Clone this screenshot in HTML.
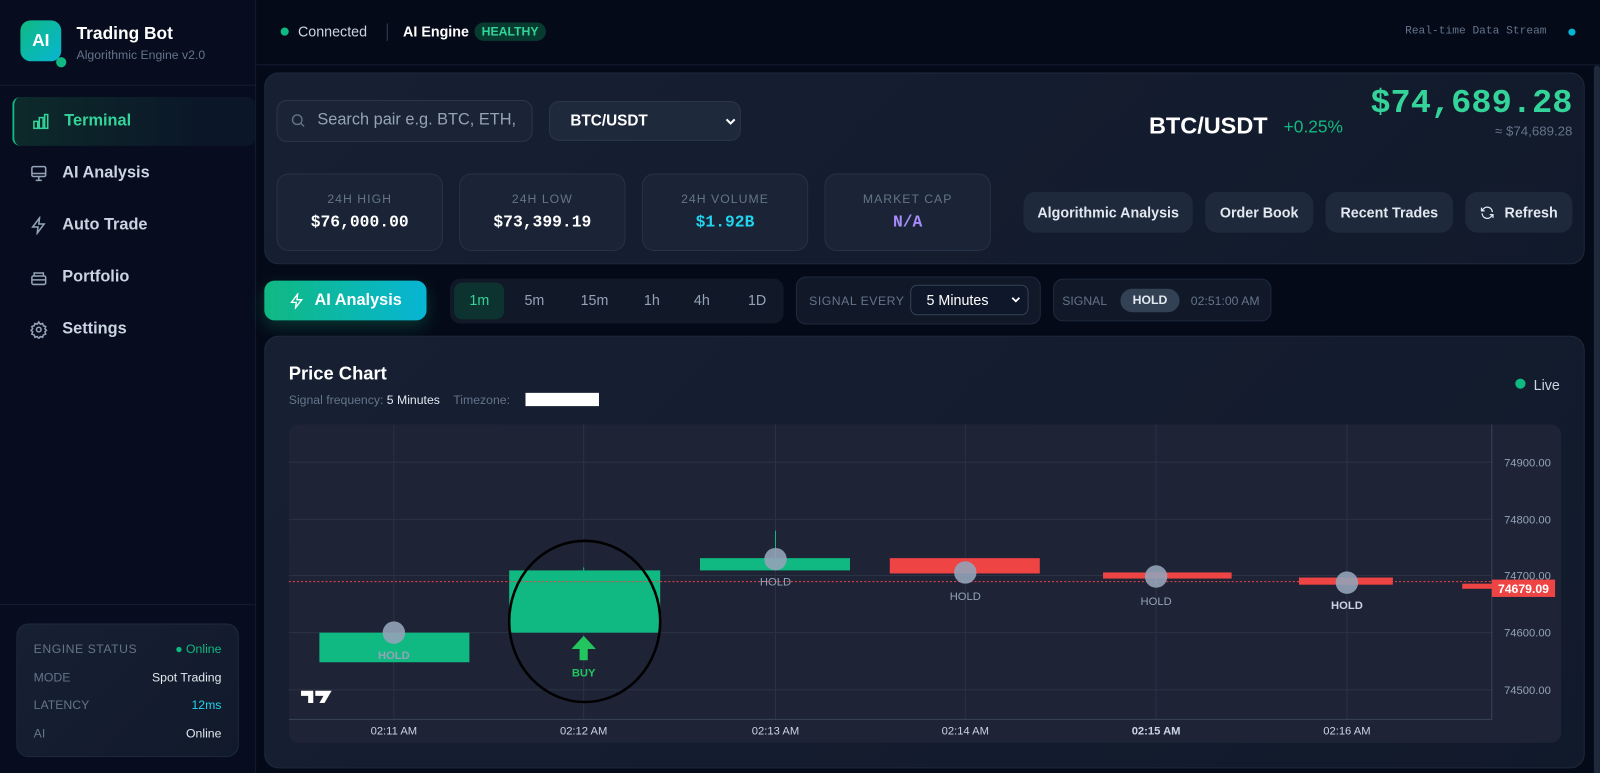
<!DOCTYPE html>
<html><head><meta charset="utf-8">
<style>
*{box-sizing:border-box;margin:0;padding:0}
html,body{width:1600px;height:773px;overflow:hidden;background:#050a18}
body{font-family:"Liberation Sans",sans-serif;color:#e5e7eb;position:relative}
#w{position:absolute;left:0;top:0;width:1568px;height:758px;transform:scale(1.0204);transform-origin:0 0}
.a{position:absolute}
.mono{font-family:"Liberation Mono",monospace}
.side{left:0;top:0;width:251px;height:773px;background:#070d1e;border-right:1px solid #141c30}
.nav{left:12px;width:238px;height:48px;display:flex;align-items:center;font-size:16px;color:#cbd5e1;font-weight:bold}
.nav svg{margin:0 14px 0 17px}
.card{background:linear-gradient(135deg,#172033,#111a2b);border:1px solid #1f2a3d;border-radius:14px}
.stat{top:170px;width:163px;height:76px;border-radius:12px;background:#1a2436;border:1px solid #263247;text-align:center}
.stat .l{font-size:12px;color:#64748b;margin-top:17px;letter-spacing:1px}
.stat .v{font-family:"Liberation Mono",monospace;font-weight:bold;font-size:16px;margin-top:7px}
.btn{top:188px;height:40px;border-radius:12px;background:#1e293b;font-size:14px;font-weight:bold;color:#e2e8f0;display:flex;align-items:center;justify-content:center}
.tf{font-size:14px;color:#94a3b8;top:286px}
.cl{font-size:11px;fill:#94a3b8;text-anchor:middle}
</style></head><body><div id="w">
<div class="a side"></div>
<div class="a" style="left:20px;top:20px;width:40px;height:40px;border-radius:10px;background:linear-gradient(135deg,#10b981,#06b6d4);color:#fff;font-weight:bold;font-size:17px;display:flex;align-items:center;justify-content:center">AI</div>
<div class="a" style="left:55px;top:56px;width:10px;height:10px;border-radius:50%;background:#10b981"></div>
<div class="a" style="left:75px;top:23px;font-size:17px;font-weight:bold;color:#fff">Trading Bot</div>
<div class="a" style="left:75px;top:47px;font-size:12px;color:#64748b">Algorithmic Engine v2.0</div>
<div class="a" style="left:0;top:83px;width:250px;height:1px;background:#141c30"></div>
<div class="a nav" style="top:95px;background:linear-gradient(90deg,#0d2a2a,#0b1628 80%);border-left:2px solid #10b981;border-radius:8px;color:#34d399">
<svg width="18" height="18" viewBox="0 0 24 24" fill="none" stroke="#34d399" stroke-width="2"><rect x="3" y="12" width="5" height="9"/><rect x="10" y="7" width="5" height="14"/><rect x="17" y="3" width="4" height="18"/></svg>Terminal</div>
<div class="a nav" style="top:146px"><svg width="18" height="18" viewBox="0 0 24 24" fill="none" stroke="#94a3b8" stroke-width="2"><rect x="3" y="3" width="18" height="13" rx="2"/><path d="M3 12h18M8 21h8M12 16v5"/></svg>AI Analysis</div>
<div class="a nav" style="top:197px"><svg width="18" height="18" viewBox="0 0 24 24" fill="none" stroke="#94a3b8" stroke-width="2"><path d="M13 2L4 14h7l-1 8 9-12h-7z"/></svg>Auto Trade</div>
<div class="a nav" style="top:248px"><svg width="18" height="18" viewBox="0 0 24 24" fill="none" stroke="#94a3b8" stroke-width="2"><rect x="3" y="10" width="18" height="11" rx="2"/><path d="M6 10V6h12v4M3 15h18"/></svg>Portfolio</div>
<div class="a nav" style="top:299px"><svg width="18" height="18" viewBox="0 0 24 24" fill="none" stroke="#94a3b8" stroke-width="2"><circle cx="12" cy="12" r="3"/><path d="M12 2l2 3 3-1 1 3 3 1-1 3 2 2-2 2 1 3-3 1-1 3-3-1-2 3-2-3-3 1-1-3-3-1 1-3-2-2 2-2-1-3 3-1 1-3 3 1z"/></svg>Settings</div>
<div class="a" style="left:0;top:592px;width:250px;height:1px;background:#141c30"></div>
<div class="a card" style="left:16px;top:611px;width:218px;height:131px;border-radius:12px;font-size:12px">
<div class="a" style="left:16px;top:17px;color:#64748b;letter-spacing:.5px">ENGINE STATUS</div><div class="a" style="right:16px;top:17px;color:#10b981">● Online</div>
<div class="a" style="left:16px;top:45px;color:#64748b">MODE</div><div class="a" style="right:16px;top:45px;color:#e2e8f0">Spot Trading</div>
<div class="a" style="left:16px;top:72px;color:#64748b">LATENCY</div><div class="a" style="right:16px;top:72px;color:#22d3ee">12ms</div>
<div class="a" style="left:16px;top:100px;color:#64748b">AI</div><div class="a" style="right:16px;top:100px;color:#e2e8f0">Online</div>
</div>
<div class="a" style="left:251px;top:63px;width:1349px;height:1px;background:#141c30"></div>
<div class="a" style="left:275px;top:27px;width:8px;height:8px;border-radius:50%;background:#10b981"></div>
<div class="a" style="left:292px;top:23px;font-size:14px;color:#cbd5e1">Connected</div>
<div class="a" style="left:379px;top:23px;width:1px;height:17px;background:#334155"></div>
<div class="a" style="left:395px;top:23px;font-size:14px;font-weight:bold;color:#fff">AI Engine</div>
<div class="a" style="left:465px;top:22px;padding:2px 7px;border-radius:9px;background:#073b30;color:#34d399;font-size:12px;font-weight:bold">HEALTHY</div>
<div class="a mono" style="left:1377px;top:25px;font-size:11px;color:#64748b">Real-time Data Stream</div>
<div class="a" style="left:1537px;top:28px;width:7px;height:7px;border-radius:50%;background:#06b6d4"></div>
<div class="a" style="left:1562px;top:64px;width:6px;height:709px;background:#1e293b;border-radius:3px"></div>
<div class="a card" style="left:259px;top:71px;width:1294px;height:188px"></div>
<div class="a" style="left:271px;top:98px;width:251px;height:41px;border-radius:10px;background:#1a2436;border:1px solid #2a3649"></div>
<svg class="a" style="left:284px;top:110px" width="16" height="16" viewBox="0 0 24 24" fill="none" stroke="#64748b" stroke-width="2"><circle cx="11" cy="11" r="7"/><path d="M16 16l5 5"/></svg>
<div class="a" style="left:311px;top:109px;font-size:16px;color:#94a3b8">Search pair e.g. BTC, ETH,</div>
<div class="a" style="left:538px;top:99px;width:188px;height:39px;border-radius:10px;background:#1e293b;border:1px solid #2a3649"></div>
<div class="a" style="left:559px;top:110px;font-size:15px;font-weight:bold;color:#fff">BTC/USDT</div>
<svg class="a" style="left:711px;top:115px" width="10" height="8" viewBox="0 0 10 8"><path d="M1 2l4 4 4-4" stroke="#fff" stroke-width="2" fill="none"/></svg>
<div class="a" style="left:1126px;top:110px;font-size:23px;font-weight:bold;color:#fff">BTC/USDT</div>
<div class="a" style="left:1258px;top:115px;font-size:17px;color:#10b981">+0.25%</div>
<div class="a mono" style="left:1300px;top:83px;font-size:33px;font-weight:bold;color:#34d399;width:241px;text-align:right">$74,689.28</div>
<div class="a" style="left:1400px;top:121px;font-size:13px;color:#64748b;width:141px;text-align:right">≈ $74,689.28</div>
<div class="a stat" style="left:271px"><div class="l">24H HIGH</div><div class="v" style="color:#fff">$76,000.00</div></div>
<div class="a stat" style="left:450px"><div class="l">24H LOW</div><div class="v" style="color:#fff">$73,399.19</div></div>
<div class="a stat" style="left:629px"><div class="l">24H VOLUME</div><div class="v" style="color:#22d3ee">$1.92B</div></div>
<div class="a stat" style="left:808px"><div class="l">MARKET CAP</div><div class="v" style="color:#a78bfa">N/A</div></div>
<div class="a btn" style="left:1003px;width:166px">Algorithmic Analysis</div>
<div class="a btn" style="left:1181px;width:106px">Order Book</div>
<div class="a btn" style="left:1299px;width:125px">Recent Trades</div>
<div class="a btn" style="left:1436px;width:105px"><svg width="15" height="15" viewBox="0 0 24 24" fill="none" stroke="#e2e8f0" stroke-width="2" style="margin-right:9px"><path d="M20 11a8 8 0 0 0-14.5-4.5L3 9M3 4v5h5M4 13a8 8 0 0 0 14.5 4.5L21 15M21 20v-5h-5"/></svg>Refresh</div>
<div class="a" style="left:259px;top:275px;width:159px;height:39px;border-radius:10px;background:linear-gradient(90deg,#10b981,#06b6d4);box-shadow:0 6px 16px rgba(16,185,129,.25);display:flex;align-items:center;justify-content:center;font-size:16px;font-weight:bold;color:#fff"><svg width="16" height="16" viewBox="0 0 24 24" fill="none" stroke="#fff" stroke-width="2" style="margin-right:9px"><path d="M13 2L4 14h7l-1 8 9-12h-7z"/></svg>AI Analysis</div>
<div class="a" style="left:441px;top:273px;width:327px;height:44px;border-radius:10px;background:#111827"></div>
<div class="a" style="left:445px;top:277px;width:49px;height:36px;border-radius:8px;background:#0d3330"></div>
<div class="a tf" style="left:460px;color:#34d399">1m</div>
<div class="a tf" style="left:514px">5m</div>
<div class="a tf" style="left:569px">15m</div>
<div class="a tf" style="left:631px">1h</div>
<div class="a tf" style="left:680px">4h</div>
<div class="a tf" style="left:733px">1D</div>
<div class="a" style="left:780px;top:271px;width:240px;height:47px;border-radius:10px;background:#111827;border:1px solid #1f2a3d"></div>
<div class="a" style="left:793px;top:288px;font-size:12px;color:#64748b;letter-spacing:.5px">SIGNAL EVERY</div>
<div class="a" style="left:892px;top:279px;width:116px;height:30px;border-radius:7px;background:#0f172a;border:1px solid #334155"></div>
<div class="a" style="left:908px;top:286px;font-size:14px;color:#fff">5 Minutes</div>
<svg class="a" style="left:991px;top:290px" width="9" height="7" viewBox="0 0 10 8"><path d="M1 2l4 4 4-4" stroke="#fff" stroke-width="2" fill="none"/></svg>
<div class="a" style="left:1032px;top:273px;width:214px;height:42px;border-radius:10px;background:#111827;border:1px solid #1f2a3d"></div>
<div class="a" style="left:1041px;top:288px;font-size:12px;color:#64748b">SIGNAL</div>
<div class="a" style="left:1098px;top:283px;width:58px;height:23px;border-radius:12px;background:#334155;font-size:12px;font-weight:bold;color:#e2e8f0;text-align:center;line-height:23px">HOLD</div>
<div class="a" style="left:1167px;top:288px;font-size:12px;color:#64748b">02:51:00 AM</div>
<div class="a card" style="left:259px;top:329px;width:1294px;height:424px"></div>
<div class="a" style="left:283px;top:356px;font-size:18px;font-weight:bold;color:#fff">Price Chart</div>
<div class="a" style="left:283px;top:385px;font-size:12px;color:#64748b">Signal frequency: <span style="color:#e2e8f0">5 Minutes</span> &nbsp;&nbsp; Timezone: </div>
<div class="a" style="left:515px;top:385px;width:72px;height:13px;background:#fff"></div>
<div class="a" style="left:1485px;top:371px;width:10px;height:10px;border-radius:50%;background:#10b981"></div>
<div class="a" style="left:1503px;top:369px;font-size:14px;color:#cbd5e1">Live</div>
<svg class="a" style="left:283px;top:416px" width="1247" height="312" viewBox="283 416 1247 312">
<rect x="283" y="416" width="1247" height="312" rx="10" fill="#1e2436"/>
<g stroke="#2a3244" stroke-width="1">
<path d="M386 416V705M572 416V705M760 416V705M946 416V705M1133 416V705M1320 416V705"/>
<path d="M283 453H1462M283 509H1462M283 564H1462M283 620H1462M283 676H1462"/>
</g>
<path d="M1462 416V705H283" stroke="#3a4458" fill="none"/>
<g font-family="Liberation Sans" font-size="11" fill="#94a3b8">
<text x="1474" y="457">74900.00</text><text x="1474" y="513">74800.00</text><text x="1474" y="568">74700.00</text><text x="1474" y="624">74600.00</text><text x="1474" y="680">74500.00</text>
</g>
<g font-family="Liberation Sans" font-size="11" fill="#cbd5e1" text-anchor="middle">
<text x="386" y="720">02:11 AM</text><text x="572" y="720">02:12 AM</text><text x="760" y="720">02:13 AM</text><text x="946" y="720">02:14 AM</text><text x="1133" y="720" font-weight="bold">02:15 AM</text><text x="1320" y="720">02:16 AM</text>
</g>
<rect x="313" y="620" width="147" height="29" fill="#10b981"/>
<rect x="499" y="559" width="148" height="61" fill="#10b981"/><path d="M572 556V559" stroke="#10b981"/>
<rect x="686" y="547" width="147" height="12" fill="#10b981"/><path d="M760 520V547" stroke="#10b981"/>
<rect x="872" y="547" width="147" height="15" fill="#ef4444"/>
<rect x="1081" y="561" width="126" height="6" fill="#ef4444"/><path d="M1133 560V573" stroke="#ef4444"/>
<rect x="1273" y="566" width="92" height="7" fill="#ef4444"/>
<rect x="1433" y="572" width="29" height="5" fill="#ef4444"/>
<path d="M283 570H1462" stroke="#ef4444" stroke-dasharray="2 2"/>
<rect x="1462" y="568" width="62" height="17" fill="#ef4444"/>
<text x="1468" y="581" font-family="Liberation Sans" font-size="12" font-weight="bold" fill="#fff">74679.09</text>
<g fill="#94a3b8" fill-opacity=".9">
<circle cx="386" cy="620" r="11"/><circle cx="760" cy="548" r="11"/><circle cx="946" cy="561" r="11"/><circle cx="1133" cy="565" r="11"/><circle cx="1320" cy="571" r="11"/>
</g>
<g font-family="Liberation Sans">
<text x="386" y="646" class="cl" font-weight="bold">HOLD</text>
<text x="760" y="574" class="cl">HOLD</text>
<text x="946" y="588" class="cl">HOLD</text>
<text x="1133" y="593" class="cl">HOLD</text>
<text x="1320" y="597" class="cl" font-weight="bold" style="fill:#cbd5e1">HOLD</text>
</g>
<path d="M572 623l-12 13h8v11h8v-11h8z" fill="#22c55e"/>
<text x="572" y="663" font-family="Liberation Sans" font-size="11" font-weight="bold" fill="#22c55e" text-anchor="middle">BUY</text>
<ellipse cx="573" cy="609" rx="74" ry="79" fill="none" stroke="#000" stroke-width="2.5"/>
<path d="M295 677h12v12h-5v-7h-7zM309 677h16l-7 12h-5l4-7h-8z" fill="#fff"/>
</svg>
</div></body></html>
